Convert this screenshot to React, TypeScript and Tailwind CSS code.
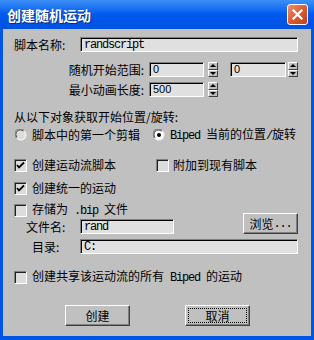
import React from 'react'

const cjk = "font-['Noto_Sans_CJK_SC',sans-serif]"
const mono = "font-['Liberation_Mono',monospace] text-[12px] tracking-[-1.2px]"

const Mono: React.FC<{ children: React.ReactNode }> = ({ children }) => (
    <span className={mono}>{children}</span>
)

// sunken edit box
const Field: React.FC<{ w: string; children?: React.ReactNode; sans?: boolean }> = ({ w, children, sans }) => (
    <div
        className={`${w} h-[15px] shrink-0 bg-[#e0e0e0] border border-t-[#808080] border-l-[#808080] border-b-white border-r-white shadow-[inset_1px_1px_0_#000] flex items-center pl-[3px] leading-none text-black ${sans ? "font-['Liberation_Sans',sans-serif] text-[11px]" : mono}`}
    >
        {children}
    </div>
)

const Spinner: React.FC = () => (
    <div className="w-[10px] h-[15px] shrink-0 flex flex-col">
        {[0, 1].map(i => (
            <div
                key={i}
                className="h-[7.5px] bg-[#c0c0c0] border border-t-white border-l-white border-b-[#404040] border-r-[#404040] flex items-center justify-center"
            >
                <svg width="6" height="3" viewBox="0 0 6 3">
                    {i === 0 ? <polygon points="3,0 6,3 0,3" fill="#000" /> : <polygon points="0,0 6,0 3,3" fill="#000" />}
                </svg>
            </div>
        ))}
    </div>
)

const Check: React.FC<{ on?: boolean }> = ({ on }) => (
    <div className="w-[13px] h-[13px] shrink-0 bg-[#dcdcdc] border border-t-[#808080] border-l-[#808080] border-b-white border-r-white shadow-[inset_1px_1px_0_#202020] flex items-center justify-center">
        {on && (
            <svg width="9" height="9" viewBox="0 0 9 9">
                <path d="M1 4 L3 6.5 L8 1.5" stroke="#000" strokeWidth="1.8" fill="none" />
            </svg>
        )}
    </div>
)

const Radio: React.FC<{ on?: boolean }> = ({ on }) => (
    <svg width="12" height="12" viewBox="0 0 12 12" className="shrink-0">
        <circle cx="6" cy="6" r="5.5" fill="#f0f0f0" />
        <path d="M1.2 9 A5 5 0 0 1 9 1.2" stroke="#808080" strokeWidth="1" fill="none" />
        <path d="M2.2 8.6 A4 4 0 0 1 8.6 2.2" stroke="#303030" strokeWidth="1" fill="none" />
        <circle cx="6" cy="6" r="4" fill={on ? '#ffffff' : '#dcdcdc'} />
        {on && <circle cx="6" cy="6" r="2" fill="#000" />}
    </svg>
)

const Btn: React.FC<{ children: React.ReactNode; focus?: boolean; w: string }> = ({ children, focus, w }) => (
    <div className={`${w} h-[21px] bg-[#c0c0c0] border border-t-white border-l-white border-b-[#404040] border-r-[#404040] shadow-[inset_-1px_-1px_0_#808080] flex items-center justify-center p-[2px]`}>
        <div className={`w-full h-full flex items-center justify-center ${focus ? 'border border-dotted border-black' : ''}`}>
            {children}
        </div>
    </div>
)

export default function App() {
    return (
        <div className={`w-[314px] h-[340px] bg-[#0055e5] flex flex-col ${cjk} text-[12px] text-black`}>
            <div className="h-[29px] shrink-0 flex items-center justify-between pl-[7px] pr-[6px] bg-linear-to-b from-[#3d8ff7] via-[#0058ee] to-[#0052e0]">
                <span className="text-white font-bold text-[14px] leading-none [text-shadow:1px_1px_0_#0a2a80]">创建随机运动</span>
                <div className="w-[21px] h-[21px] rounded-[3px] border border-white bg-linear-to-br from-[#f0906a] via-[#e05a2c] to-[#c0401a] flex items-center justify-center">
                    <svg width="11" height="11" viewBox="0 0 11 11">
                        <path d="M1.5 1.5 L9.5 9.5 M9.5 1.5 L1.5 9.5" stroke="#fff" strokeWidth="2.2" strokeLinecap="square" />
                    </svg>
                </div>
            </div>

            <div className="flex-1 mx-[3px] mb-[4px] bg-[#c0c0c0] flex flex-col pt-[8px] pl-[11px] leading-[16px]">
                <div className="flex items-center h-[15px]">
                    <span className="w-[66px]">脚本名称:</span>
                    <Field w="w-[218px]">randscript</Field>
                </div>

                <div className="flex items-center h-[15px] mt-[10px]">
                    <span className="w-[135px] text-right pr-[5px]">随机开始范围:</span>
                    <Field w="w-[55px]" sans>0</Field>
                    <div className="ml-[4px]"><Spinner /></div>
                    <div className="ml-[12px]"><Field w="w-[56px]" sans>0</Field></div>
                    <div className="ml-[2px]"><Spinner /></div>
                </div>

                <div className="flex items-center h-[15px] mt-[5px]">
                    <span className="w-[135px] text-right pr-[5px]">最小动画长度:</span>
                    <Field w="w-[55px]" sans>500</Field>
                    <div className="ml-[4px]"><Spinner /></div>
                </div>

                <div className="h-[16px] mt-[12px] flex items-center">从以下对象获取开始位置/旋转:</div>

                <div className="h-[16px] mt-[2px] flex items-center">
                    <div className="ml-[1px]"><Radio /></div>
                    <span className="ml-[5px] w-[121px]">脚本中的第一个剪辑</span>
                    <Radio on />
                    <span className="ml-[5px]"><Mono>Biped </Mono>当前的位置<Mono>/</Mono>旋转</span>
                </div>

                <div className="h-[16px] mt-[14px] flex items-center">
                    <Check on />
                    <span className="ml-[5px] w-[124px]">创建运动流脚本</span>
                    <Check />
                    <span className="ml-[4px]">附加到现有脚本</span>
                </div>

                <div className="h-[16px] mt-[7px] flex items-center">
                    <Check on />
                    <span className="ml-[5px]">创建统一的运动</span>
                </div>

                <div className="h-[16px] mt-[6px] flex items-center">
                    <Check />
                    <span className="ml-[5px]">存储为<Mono> .bip </Mono>文件</span>
                </div>

                <div className="h-[20px] -mt-[4px] flex items-end">
                    <span className="w-[66px] pl-[12px] h-[15px] flex items-center">文件名:</span>
                    <Field w="w-[94px]">rand</Field>
                    <div className="ml-[69px]">
                        <Btn w="w-[55px]">浏览<Mono>...</Mono></Btn>
                    </div>
                </div>

                <div className="flex items-center h-[15px] mt-[5px]">
                    <span className="w-[66px] pl-[18px]">目录:</span>
                    <Field w="w-[218px]">C:</Field>
                </div>

                <div className="h-[16px] mt-[15px] flex items-center">
                    <Check />
                    <span className="ml-[5px]">创建共享该运动流的所有<Mono> Biped </Mono>的运动</span>
                </div>

                <div className="flex mt-[20px] pl-[51px] gap-[55px]">
                    <Btn w="w-[65px]">创建</Btn>
                    <Btn w="w-[65px]" focus>取消</Btn>
                </div>
            </div>
        </div>
    )
}
